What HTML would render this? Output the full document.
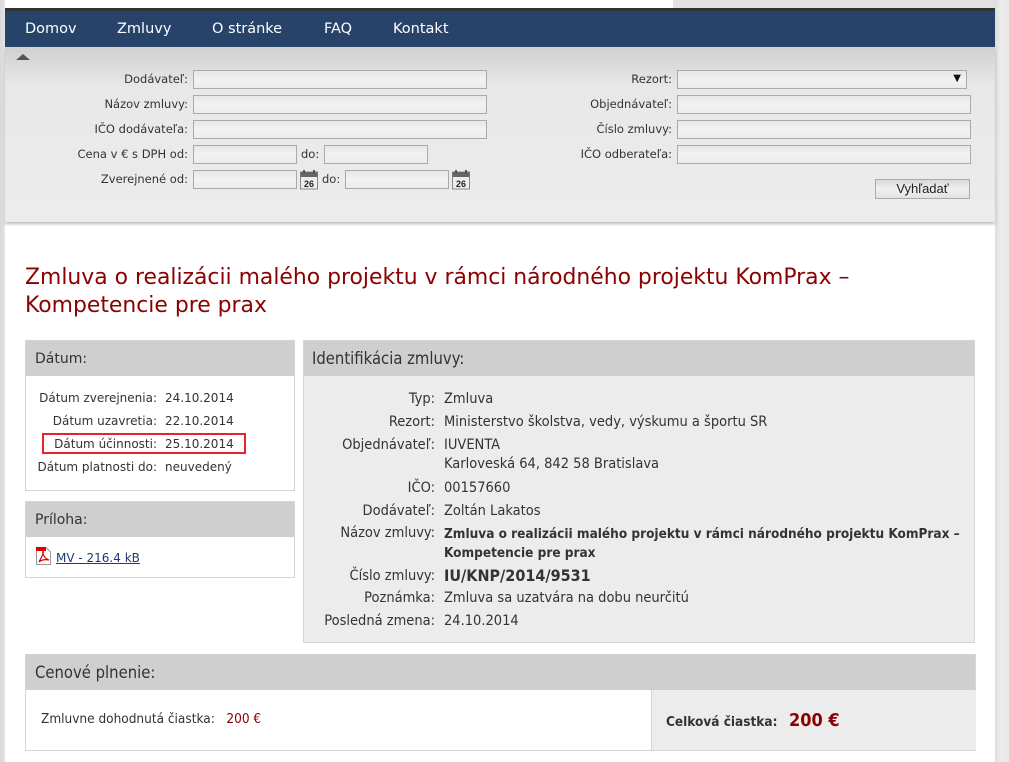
<!DOCTYPE html>
<html><head><meta charset="utf-8">
<style>
*{margin:0;padding:0;box-sizing:border-box}
body{width:1009px;height:762px;overflow:hidden;background:#fff;position:relative;font-family:"DejaVu Sans","Liberation Sans",sans-serif;color:#333}
.a{position:absolute}
.lstrip{left:0;top:0;width:5px;height:762px;background:linear-gradient(to right,#d8d8d8,#e4e4e4)}
.rstrip{left:995px;top:0;width:14px;height:762px;background:linear-gradient(to right,#dcdcdc,#ececec 40%,#e9e9e9)}
.topg{left:673px;top:0;width:322px;height:8px;background:#e2e2e2}
.nav{left:5px;top:8px;width:990px;height:39px;background:#28436a;border-top:3px solid #333}
.nav span{position:absolute;top:10px;color:#fff;font-size:14.5px}
.panel{left:5px;top:47px;width:990px;height:175px;background:linear-gradient(#d0d0d0,#e8e8e8 40px,#ececec);box-shadow:0 2px 3px #bbb}
.lbl{font-size:11.5px;color:#333;text-align:right;line-height:19px}
.inp{height:19px;border:1px solid #aaa;background:linear-gradient(#e6e6e6,#f2f2f2 50%,#ececec)}
.title{left:25px;top:264px;font-size:21.9px;color:#8b0000;line-height:28px;white-space:nowrap}
.box{border:1px solid #d5d5d5}
.hd{background:#cfcfcf;height:35px;font-size:14px;padding:10px 0 0 9px;color:#333}
.dl{font-size:12px;line-height:23px}
.nr{font-family:"DejaVu Sans Condensed","DejaVu Sans",sans-serif;font-stretch:condensed;font-size:14.5px}
.rl{position:absolute;left:0;width:131px;text-align:right;white-space:nowrap}
.rv{position:absolute;left:140px;white-space:nowrap}
.bt{font-size:13.5px}
</style></head><body>
<div class="a lstrip"></div>
<div class="a rstrip"></div>
<div class="a topg"></div>
<div class="a nav">
<span style="left:20px">Domov</span><span style="left:112px">Zmluvy</span><span style="left:207px">O stránke</span><span style="left:319px">FAQ</span><span style="left:388px">Kontakt</span>
</div>
<div class="a panel"></div>
<svg class="a" style="left:16px;top:54px" width="14" height="7"><polygon points="0,6 7,0 14,6" fill="#555"/></svg>

<div class="a lbl" style="left:60px;top:70px;width:128px">Dodávateľ:</div>
<div class="a lbl" style="left:60px;top:95px;width:128px">Názov zmluvy:</div>
<div class="a lbl" style="left:60px;top:120px;width:128px">IČO dodávateľa:</div>
<div class="a lbl" style="left:40px;top:145px;width:148px">Cena v € s DPH od:</div>
<div class="a lbl" style="left:40px;top:170px;width:148px">Zverejnené od:</div>
<div class="a inp" style="left:193px;top:70px;width:294px"></div>
<div class="a inp" style="left:193px;top:95px;width:294px"></div>
<div class="a inp" style="left:193px;top:120px;width:294px"></div>
<div class="a inp" style="left:193px;top:145px;width:104px"></div>
<div class="a lbl" style="left:301px;top:145px">do:</div>
<div class="a inp" style="left:324px;top:145px;width:104px"></div>
<div class="a inp" style="left:193px;top:170px;width:104px"></div>
<div class="a lbl" style="left:322px;top:170px">do:</div>
<div class="a inp" style="left:345px;top:170px;width:104px"></div>
<svg class="a" style="left:300px;top:170px" width="18" height="20"><rect x="0.5" y="2" width="17" height="17" fill="#eee" stroke="#888"/><rect x="0.5" y="2" width="17" height="5" fill="#666"/><rect x="3" y="0" width="2" height="4" fill="#555"/><rect x="13" y="0" width="2" height="4" fill="#555"/><text x="9" y="17" font-size="9" font-weight="bold" text-anchor="middle" fill="#222" font-family="Liberation Sans">26</text></svg>
<svg class="a" style="left:452px;top:170px" width="18" height="20"><rect x="0.5" y="2" width="17" height="17" fill="#eee" stroke="#888"/><rect x="0.5" y="2" width="17" height="5" fill="#666"/><rect x="3" y="0" width="2" height="4" fill="#555"/><rect x="13" y="0" width="2" height="4" fill="#555"/><text x="9" y="17" font-size="9" font-weight="bold" text-anchor="middle" fill="#222" font-family="Liberation Sans">26</text></svg>

<div class="a lbl" style="left:540px;top:70px;width:132px">Rezort:</div>
<div class="a lbl" style="left:540px;top:95px;width:132px">Objednávateľ:</div>
<div class="a lbl" style="left:540px;top:120px;width:132px">Číslo zmluvy:</div>
<div class="a lbl" style="left:540px;top:145px;width:132px">IČO odberateľa:</div>
<div class="a inp" style="left:677px;top:70px;width:290px"><span style="position:absolute;right:5px;top:2px;font-size:10px;color:#111">▼</span></div>
<div class="a inp" style="left:677px;top:95px;width:294px"></div>
<div class="a inp" style="left:677px;top:120px;width:294px"></div>
<div class="a inp" style="left:677px;top:145px;width:294px"></div>
<div class="a" style="left:875px;top:179px;width:95px;height:20px;border:1px solid #aaa;background:linear-gradient(#d8d8d8,#f0f0f0 50%,#e2e2e2);font-family:'Liberation Sans',sans-serif;font-size:13px;text-align:center;line-height:18px;color:#222">Vyhľadať</div>

<div class="a title">Zmluva o realizácii malého projektu v rámci národného projektu KomPrax –<br>Kompetencie pre prax</div>

<div class="a box" style="left:25px;top:340px;width:270px;height:151px">
<div class="hd">Dátum:</div>
<div class="dl" style="position:absolute;top:46px;left:0;width:131px;text-align:right;white-space:nowrap">Dátum zverejnenia:<br>Dátum uzavretia:<br>Dátum účinnosti:<br>Dátum platnosti do:</div>
<div class="dl" style="position:absolute;top:46px;left:139px">24.10.2014<br>22.10.2014<br>25.10.2014<br>neuvedený</div>
</div>
<div class="a" style="left:42px;top:433px;width:204px;height:21px;border:2px solid #e8232a"></div>

<div class="a box" style="left:25px;top:501px;width:270px;height:77px">
<div class="hd">Príloha:</div>
<svg style="position:absolute;left:10px;top:45px" width="15" height="18"><path d="M0.5 0.5H10L14.5 5V17.5H0.5Z" fill="#fff" stroke="#999"/><rect x="0" y="0" width="10" height="4" fill="#d00"/><path d="M3 15 C6 9 8 6 7 4 C6 6 8 11 13 13 C9 12 5 13 3 15Z" fill="none" stroke="#d00" stroke-width="1.2"/></svg>
<div style="position:absolute;left:30px;top:49px;font-size:12px;color:#1a3a7a;text-decoration:underline">MV - 216.4 kB</div>
</div>

<div class="a box nr" style="left:303px;top:340px;width:672px;height:303px;background:#ececec">
<div class="hd" style="font-size:16.5px;padding:8px 0 0 8px">Identifikácia zmluvy:</div>
<div class="rl" style="top:50px">Typ:</div><div class="rv" style="top:50px">Zmluva</div>
<div class="rl" style="top:73px">Rezort:</div><div class="rv" style="top:73px">Ministerstvo školstva, vedy, výskumu a športu SR</div>
<div class="rl" style="top:96px">Objednávateľ:</div><div class="rv" style="top:96px">IUVENTA</div>
<div class="rv" style="top:115px">Karloveská 64, 842 58 Bratislava</div>
<div class="rl" style="top:139px">IČO:</div><div class="rv" style="top:139px">00157660</div>
<div class="rl" style="top:162px">Dodávateľ:</div><div class="rv" style="top:162px">Zoltán Lakatos</div>
<div class="rl" style="top:184px">Názov zmluvy:</div><div class="rv bt" style="top:185px"><b>Zmluva o realizácii malého projektu v rámci národného projektu KomPrax –</b></div>
<div class="rv bt" style="top:204px"><b>Kompetencie pre prax</b></div>
<div class="rl" style="top:227px">Číslo zmluvy:</div><div class="rv" style="top:225px;font-size:16px"><b>IU/KNP/2014/9531</b></div>
<div class="rl" style="top:249px">Poznámka:</div><div class="rv" style="top:249px">Zmluva sa uzatvára na dobu neurčitú</div>
<div class="rl" style="top:272px">Posledná zmena:</div><div class="rv" style="top:272px">24.10.2014</div>
</div>

<div class="a box nr" style="left:25px;top:654px;width:951px;height:97px">
<div class="hd" style="font-size:16.5px;padding:8px 0 0 9px">Cenové plnenie:</div>
<div style="position:absolute;left:625px;top:35px;width:325px;height:60px;background:#ececec;border-left:1px solid #d5d5d5"></div>
<div style="position:absolute;left:15px;top:56px;color:#333;font-size:13.5px;white-space:nowrap">Zmluvne dohodnutá čiastka:&nbsp;&nbsp; <span style="color:#8b0000">200 €</span></div>
<div style="position:absolute;left:640px;top:55px;color:#333;font-size:13.5px;white-space:nowrap"><b>Celková čiastka:</b>&nbsp;&nbsp; <b style="color:#8b0000;font-size:18px">200 €</b></div>
</div>
</body></html>
